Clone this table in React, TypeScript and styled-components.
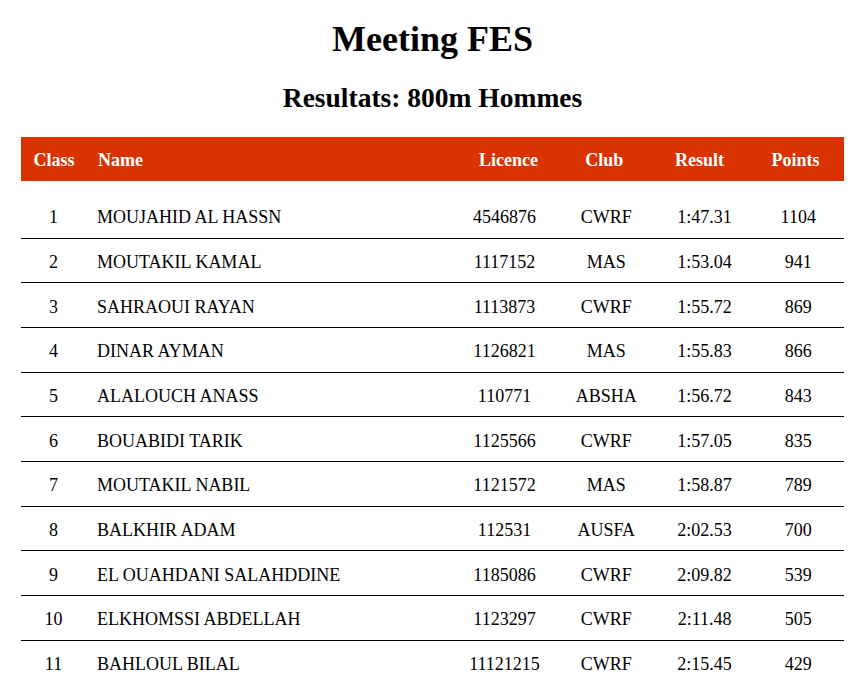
import styled, { createGlobalStyle } from "styled-components"

const GlobalStyle = createGlobalStyle`
body {
    margin: 0;
    background: #ffffff;
    font-family: "Liberation Serif", "Times New Roman", serif;
    color: #000000;
}
`

const Page = styled.main`
display: flex;
flex-direction: column;
padding: 19px 18px 0 21px;
`

const Titulo = styled.h1`
margin: 0;
font-size: 36px;
line-height: 1.15;
font-weight: 700;
text-align: center;
`

const SubTitulo = styled.h2`
margin: 21.6px 0 0;
font-size: 27.5px;
line-height: 1.15;
font-weight: 700;
text-align: center;
`

const Cabecalho = styled.div`
margin-top: 23.4px;
box-sizing: border-box;
height: 44px;
padding-top: 2px;
background-color: #d83300;
color: #ffffff;
font-weight: 700;
font-size: 18px;
display: grid;
grid-template-columns: 66px 373.5px 96px 95.5px 95px 97px;
align-items: center;
`

const Corpo = styled.div`
margin-top: 13px;
display: flex;
flex-direction: column;
`

const Linha = styled.div`
box-sizing: border-box;
height: 44.67px;
padding-top: 4px;
border-bottom: 1px solid #000000;
font-size: 18px;
display: grid;
grid-template-columns: 65px 367.25px 102.5px 101px 95.75px 91.5px;
align-items: center;
`

const Celula = styled.span<{ $esquerda?: boolean }>`
text-align: ${props => props.$esquerda ? 'left' : 'center'};
padding-left: ${props => props.$esquerda ? '11px' : '0'};
white-space: nowrap;
`

const resultados = [
    ['1', 'MOUJAHID AL HASSN', '4546876', 'CWRF', '1:47.31', '1104'],
    ['2', 'MOUTAKIL KAMAL', '1117152', 'MAS', '1:53.04', '941'],
    ['3', 'SAHRAOUI RAYAN', '1113873', 'CWRF', '1:55.72', '869'],
    ['4', 'DINAR AYMAN', '1126821', 'MAS', '1:55.83', '866'],
    ['5', 'ALALOUCH ANASS', '110771', 'ABSHA', '1:56.72', '843'],
    ['6', 'BOUABIDI TARIK', '1125566', 'CWRF', '1:57.05', '835'],
    ['7', 'MOUTAKIL NABIL', '1121572', 'MAS', '1:58.87', '789'],
    ['8', 'BALKHIR ADAM', '112531', 'AUSFA', '2:02.53', '700'],
    ['9', 'EL OUAHDANI SALAHDDINE', '1185086', 'CWRF', '2:09.82', '539'],
    ['10', 'ELKHOMSSI ABDELLAH', '1123297', 'CWRF', '2:11.48', '505'],
    ['11', 'BAHLOUL BILAL', '11121215', 'CWRF', '2:15.45', '429'],
]

export default function App() {
    return (
        <Page>
            <GlobalStyle />
            <Titulo>Meeting FES</Titulo>
            <SubTitulo>Resultats: 800m Hommes</SubTitulo>
            <Cabecalho>
                <Celula>Class</Celula>
                <Celula $esquerda>Name</Celula>
                <Celula>Licence</Celula>
                <Celula>Club</Celula>
                <Celula>Result</Celula>
                <Celula>Points</Celula>
            </Cabecalho>
            <Corpo>
                {resultados.map(r => (
                    <Linha key={r[0]}>
                        <Celula>{r[0]}</Celula>
                        <Celula $esquerda>{r[1]}</Celula>
                        <Celula>{r[2]}</Celula>
                        <Celula>{r[3]}</Celula>
                        <Celula>{r[4]}</Celula>
                        <Celula>{r[5]}</Celula>
                    </Linha>
                ))}
            </Corpo>
        </Page>
    )
}
